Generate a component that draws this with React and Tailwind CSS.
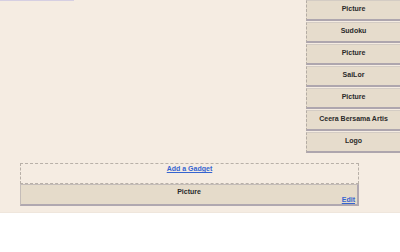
import React from 'react';

const sidebarItems = ['Picture', 'Sudoku', 'Picture', 'SaiLor', 'Picture', 'Ceera Bersama Artis', 'Logo'];

const SidebarGadget = ({ title }) => (
  <div className="h-[21px] flex items-center justify-center pb-px bg-[#e6dccc] border-l border-l-[#b4aca4] [border-left-style:dashed] border-t border-t-[#d4ccc4] border-b-2 border-b-[#aea6ae] text-[7px] font-bold text-[#2a2a2a]">
    {title}
  </div>
);

export default function App() {
  return (
    <div className="w-[400px] h-[252px] bg-white overflow-hidden font-['Liberation_Sans',Arial,sans-serif]">
      <div className="h-[213px] bg-[#f5ece2] border-b border-b-[#efe6dc] flex flex-col">
        {/* top strip */}
        <div className="h-px w-[74px] bg-[#d6cfe2]" />

        {/* sidebar */}
        <div className="ml-[306px] -mt-[1px] flex flex-col gap-px">
          {sidebarItems.map((item, i) => (
            <SidebarGadget key={i} title={item} />
          ))}
        </div>

        {/* main column */}
        <div className="ml-[20px] w-[339px] mt-[10px] flex flex-col">
          <div className="h-[21px] border border-dashed border-[#b8b0a8] flex justify-center">
            <a href="#" className="text-[7px] font-bold text-[#3564d0] underline leading-[10px]">
              Add a Gadget
            </a>
          </div>
          <div className="h-[22px] bg-[#e5dbca] border-l border-t border-[#c4bcb8] border-r-2 border-b-2 border-r-[#b0a8b0] border-b-[#b0a8b0] flex flex-col px-[2px]">
            <div className="text-center text-[7px] font-bold text-[#2a2a2a] leading-[9px] mt-[2px]">Picture</div>
            <div className="flex justify-end -mt-px">
              <a href="#" className="text-[7px] font-bold text-[#3564d0] underline leading-[9px]">
                Edit
              </a>
            </div>
          </div>
        </div>
      </div>
    </div>
  );
}
